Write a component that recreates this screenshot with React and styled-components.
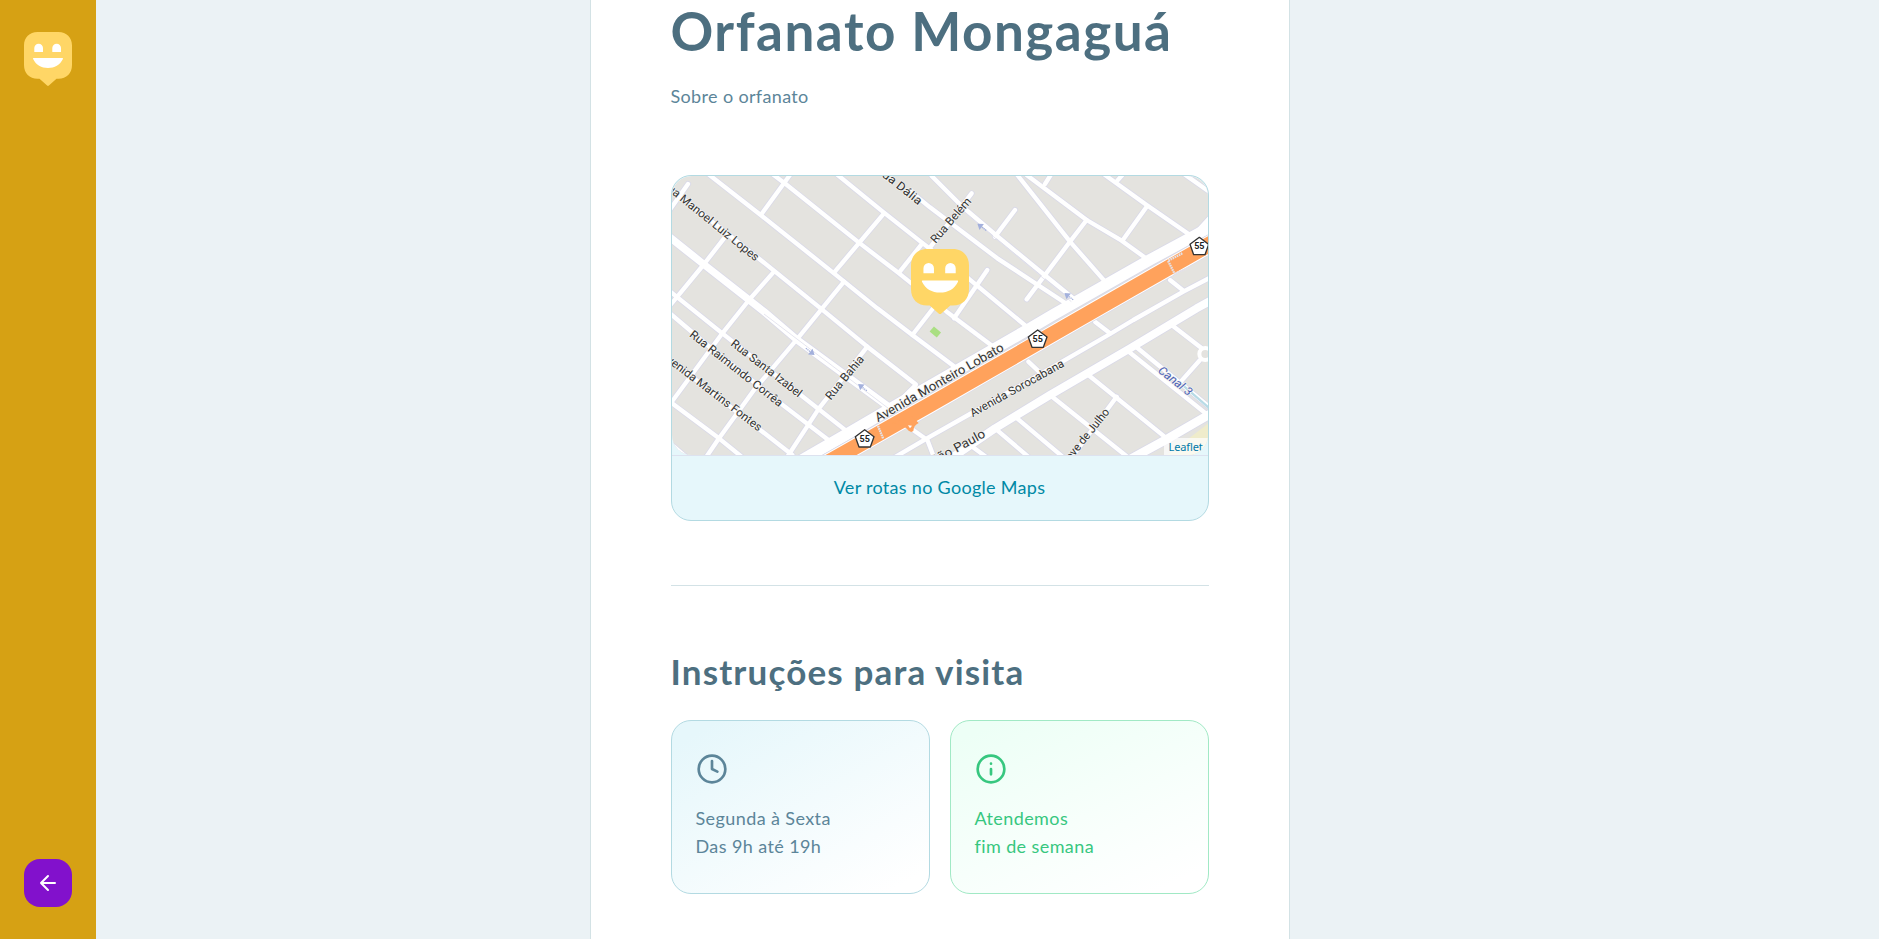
import React from 'react';
import styled, { createGlobalStyle } from 'styled-components';

const GlobalStyle = createGlobalStyle`
  * { margin: 0; padding: 0; box-sizing: border-box; }
  body {
    background: #ebf2f5;
    color: #5c8599;
    font: 400 18px/28px Lato, "Open Sans", sans-serif;
    overflow: hidden;
  }
`;

const Page = styled.div`
  display: grid;
  grid-template-columns: 96px 1fr 96px;
  grid-template-rows: 939px;
  height: 939px;
  overflow: hidden;
`;

const Sidebar = styled.aside`
  display: flex;
  flex-direction: column;
  justify-content: space-between;
  align-items: center;
  padding: 32px 24px;
  background: #d6a114;
`;

const BackButton = styled.button`
  display: flex;
  align-items: center;
  justify-content: center;
  width: 48px;
  height: 48px;
  border: 0;
  border-radius: 16px;
  background: #8211cc;
  cursor: pointer;
`;

const Details = styled.main`
  width: 700px;
  height: 939px;
  margin: 0 auto;
  padding: 2px 80px 0;
  background: #fff;
  border: 1px solid #d3e2e5;
  border-width: 0 1px;
`;

const Title = styled.h1`
  font-size: 53px;
  font-weight: 700;
  line-height: 58px;
  letter-spacing: 1.5px;
  color: #4d6f80;
  white-space: nowrap;
`;

const About = styled.p`
  margin-top: 22px;
  letter-spacing: 0.35px;
`;

const MapCard = styled.section`
  margin-top: 65px;
  height: 346px;
  background: #e6f7fb;
  border: 1px solid #b3dae2;
  border-radius: 20px;
  overflow: hidden;
`;

const MapView = styled.div`
  position: relative;
  height: 279px;
  border-radius: 20px;
  overflow: hidden;
`;

const MapDrawing = styled.svg`
  display: block;
  width: 100%;
  height: 279px;
  background: #e4e3df;
`;

const PinSlot = styled.div`
  position: absolute;
  left: 239.5px;
  top: 73px;
  line-height: 0;
`;

const Attribution = styled.div`
  position: absolute;
  right: 0;
  bottom: 0;
  width: 44px;
  padding-left: 5px;
  font: 11px/17px "Noto Sans", sans-serif;
  letter-spacing: -0.1px;
  color: #0078a8;
  background: rgba(255, 255, 255, 0.7);
`;

const RouteLink = styled.a`
  display: block;
  padding: 19px 0 21px;
  border-top: 1px solid #dde2ef;
  line-height: 24px;
  text-align: center;
  color: #0089a5;
  letter-spacing: 0.3px;
`;

const Divider = styled.hr`
  height: 1px;
  margin: 64px 0 62px;
  border: 0;
  background: #d3e2e6;
`;

const Heading = styled.h2`
  margin-bottom: 26px;
  font-size: 35px;
  font-weight: 700;
  line-height: 46px;
  letter-spacing: 1.15px;
  color: #4d6f80;
`;

const Cards = styled.div`
  display: grid;
  grid-template-columns: 1fr 1fr;
  gap: 20px;
`;

const tones = {
  hours: ['linear-gradient(149.97deg, #e6f7fb 8.13%, #fff 92.67%)', '#b3dae2', '#5c8599'],
  weekend: ['linear-gradient(154.16deg, #edfff6 7.85%, #fff 91.03%)', '#a1e9c5', '#37c77f'],
};

const Card = styled.div`
  height: 174px;
  padding: 32px 24px;
  border-radius: 20px;
  border: 1px solid ${(p) => tones[p.$tone][1]};
  background: ${(p) => tones[p.$tone][0]};
  color: ${(p) => tones[p.$tone][2]};
  letter-spacing: 0.4px;
`;

const CardIcon = styled.svg`
  display: block;
  width: 32px;
  height: 32px;
  margin-bottom: 19px;
  fill: none;
  stroke: currentColor;
  stroke-width: 2;
  stroke-linecap: round;
  stroke-linejoin: round;
`;

const Smiley = ({ width }) => (
  <svg width={width} height={(width * 54) / 48} viewBox="0 0 48 54">
    <path fill="#ffd666" d="M13.5 0h21C42.500 0 48 5.500 48 13.500v19.500C48 41.500 42.500 46.700 34.500 46.700h-2L24.900 53.600q-.9.800-1.800 0L15.500 46.700h-2C5.500 46.700 0 41.500 0 33V13.500C0 5.500 5.500 0 13.500 0z" />
    <path fill="#fff" d="M10.300 20v-4a4.350 4.350 0 0 1 8.700 0v4zM28.300 20v-4a4.350 4.350 0 0 1 8.700 0v4zM9.600 26h28.800q.9 0 .5 1C36 33 30.600 36 24 36S12 33 9.100 27q-.4-1 .5-1z" />
  </svg>
);

const streets = [
  '130,10 290,135 510,310 640,415 745,495 885,600',
  '320,8 365,42 585,218 705,310 848,425 988,530',
  '515,10 660,128 770,215 913,325 1088,470',
  '803,18 893,108 998,197 1138,312 1228,385',
  '740,65 798,112 1000,265 1213,405',
  '1088,15 1268,150 1373,212 1453,270',
  '1060,15 1218,215 1328,340',
  '1320,13 1448,105 1578,195',
  '1560,12 1640,68',
  '1640,140 1590,195',
  '1160,15 1143,42',
  '1375,15 1360,32',
  '1448,110 1375,212',
  '1268,150 1218,215 1088,388',
  '1053,120 993,200',
  '923,70 800,230',
  '970,300 870,445',
  '775,220 705,308',
  '660,130 510,308',
  '380,12 292,133',
  '72,42 10,130',
  '180,205 118,285 20,404',
  '330,305 255,390 175,490 20,700',
  '540,335 397,510 270,660 165,805 124,865',
  '610,530 465,715 367,865',
  '815,405 745,495',
  '755,645 715,685',
  '20,57 290,270 470,415 610,530 755,643',
  '20,366 175,490 410,675 550,785',
  '20,432 130,525 350,700 500,815',
  '0,555 385,855',
  '20,697 165,805 235,862',
  '20,822 65,860',
  '690,863 798,800 918,732 1200,572 1338,492 1408,450 1558,365 1640,322',
  '1388,540 1635,738',
  '1413,528 1640,714',
  '1523,465 1620,540',
  '1608,570 1553,632',
  '1273,615 1508,805',
  '1158,675 1392,862',
  '1053,740 1198,862',
  '993,775 1095,862',
  '1358,680 1222,864',
  '918,825 968,862',
  '1093,575 1125,605',
  '1293,455 1338,490',
  '1518,330 1558,362',
  '740,775 790,810 810,862',
];

const avenues = [
  { width: 22, points: '15,200 118,282 300,425 400,510 690,722' },
  { width: 34, points: '400,878 560,786 700,704 1098,475 1168,434 1460,268 1645,168' },
  { width: 24, points: '860,866 993,775 1158,675 1398,535 1598,415 1645,389' },
  { width: 26, points: '1398,868 1513,805 1645,728' },
];

const highway = 'M480 884 798 704 1290 421 1645 218';

const labels = [
  [8, 60, 274, 275, 'ua Manoel Luiz Lopes', 35],
  [652, 18, 763, 106, 'da Dália', 35],
  [815, 222, 924, 95, 'Rua Belém', 35],
  [198, 525, 403, 683, 'Rua Santa Izabel', 35],
  [74, 498, 345, 712, 'Rua Raimundo Corrêa', 35],
  [6, 574, 283, 785, 'venida Martins Fontes', 35],
  [500, 692, 602, 568, 'Rua Bahia', 35],
  [642, 757, 1022, 540, 'Avenida Monteiro Lobato', 38],
  [926, 742, 1203, 588, 'Avenida Sorocabana', 35],
  [808, 886, 967, 799, 'São Paulo', 38],
  [1205, 892, 1338, 727, 'Nove de Julho', 35],
];

const Label = ({ data: [x1, y1, x2, y2, text, size], ...rest }) => (
  <text
    transform={`translate(${x1} ${y1}) rotate(${(Math.atan2(y2 - y1, x2 - x1) * 180) / Math.PI})`}
    textLength={Math.hypot(x2 - x1, y2 - y1)}
    lengthAdjust="spacingAndGlyphs"
    fontSize={size}
    fill="#333"
    stroke="#f3f3f0"
    strokeWidth="4"
    paintOrder="stroke"
    {...rest}
  >
    {text}
  </text>
);

const Shield = ({ x, y }) => (
  <g transform={`translate(${x} ${y})`}>
    <path d="M0-27 28-6 17 25h-34L-28-6z" fill="#fff" stroke="#333" strokeWidth="4" strokeLinejoin="round" />
    <text y="9" textAnchor="middle" fontSize="27" fontWeight="700" fill="#222">55</text>
  </g>
);

const Arrow = ({ x, y, turn }) => (
  <g transform={`translate(${x} ${y}) rotate(${turn})`}>
    <path d="M-17 0H10" stroke="#a3b0dc" strokeWidth="4" strokeDasharray="4 2" />
    <path d="M0-11 16 0 0 11z" fill="#a3b0dc" />
  </g>
);

const StreetMap = () => (
  <MapDrawing viewBox="24 18 1608 837" preserveAspectRatio="none" fontFamily="Roboto, sans-serif">
    <path d="M1640 755 1500 862h140z" fill="#efeccb" />
    <g fill="none" stroke="#dadae8">
      {streets.map((s) => <polyline key={s} points={s} strokeWidth="18" strokeLinecap="round" />)}
      {avenues.map((a) => <polyline key={a.points} points={a.points} strokeWidth={a.width + 5} />)}
    </g>
    <g fill="none" stroke="#fff" strokeLinejoin="round">
      {streets.map((s) => <polyline key={s} points={s} strokeWidth="13" strokeLinecap="round" />)}
      {avenues.map((a) => <polyline key={a.points} points={a.points} strokeWidth={a.width} />)}
    </g>
    <path d="M300 432 690 728M895 122 1222 395" stroke="#e0e0ec" strokeWidth="2.500" fill="none" />
    <path d="M1550 640 1640 718" stroke="#b8dbe6" strokeWidth="7" />
    <circle cx="1624" cy="552" r="18" fill="#e4e3df" stroke="#fff" strokeWidth="12" />
    <path d={highway} fill="none" stroke="#dadae8" strokeWidth="56" />
    <path d={highway} fill="none" stroke="#fff" strokeWidth="52" />
    <path d={highway} fill="none" stroke="#ffa25c" strokeWidth="46" />
    <path d="M684 760q32 2 50 22l8 4 6-3q0-16 16-24l-20-20z" fill="#ffa25c" />
    <path d="M732 766l12 1-6 8z" fill="#fff" />
    <path d="M642 768 658 807M1555 250 1512 272 1532 312 1582 290" fill="none" stroke="#e4e1e7" strokeWidth="7" strokeDasharray="5 2" />
    <rect x="-14" y="-10" width="28" height="20" fill="#aadf82" transform="translate(814 486) rotate(40)" />
    <Arrow x={953} y={171} turn={217} />
    <Arrow x={1214} y={379} turn={217} />
    <Arrow x={439} y={545} turn={37} />
    <Arrow x={595} y={652} turn={217} />
    {labels.map((l) => <Label key={l[4]} data={l} />)}
    <Label data={[1480, 605, 1573, 679, 'Canal 3', 35]} fill="#4a60b5" fontStyle="italic" />
    <Shield x={1606} y={229} />
    <Shield x={1121} y={507} />
    <Shield x={602} y={806} />
  </MapDrawing>
);

export default function App() {
  return (
    <>
      <GlobalStyle />
      <Page>
        <Sidebar>
          <Smiley width={48} />
          <BackButton aria-label="Voltar">
            <svg width="24" height="24" viewBox="0 0 24 24" fill="none" stroke="#fff" strokeWidth="2" strokeLinecap="round" strokeLinejoin="round">
              <path d="M19 12H5M12 19l-7-7 7-7" />
            </svg>
          </BackButton>
        </Sidebar>
        <Details>
          <Title>Orfanato Mongaguá</Title>
          <About>Sobre o orfanato</About>
          <MapCard>
            <MapView>
              <StreetMap />
              <PinSlot><Smiley width={58} /></PinSlot>
              <Attribution>Leaflet</Attribution>
            </MapView>
            <RouteLink>Ver rotas no Google Maps</RouteLink>
          </MapCard>
          <Divider />
          <Heading>Instruções para visita</Heading>
          <Cards>
            <Card $tone="hours">
              <CardIcon viewBox="0 0 24 24"><circle cx="12" cy="12" r="10" /><path d="M12 6v6l4 2" /></CardIcon>
              <p>Segunda à Sexta<br />Das 9h até 19h</p>
            </Card>
            <Card $tone="weekend">
              <CardIcon viewBox="0 0 24 24"><circle cx="12" cy="12" r="10" /><path d="M12 16v-4M12 8h.01" /></CardIcon>
              <p>Atendemos<br />fim de semana</p>
            </Card>
          </Cards>
        </Details>
      </Page>
    </>
  );
}
